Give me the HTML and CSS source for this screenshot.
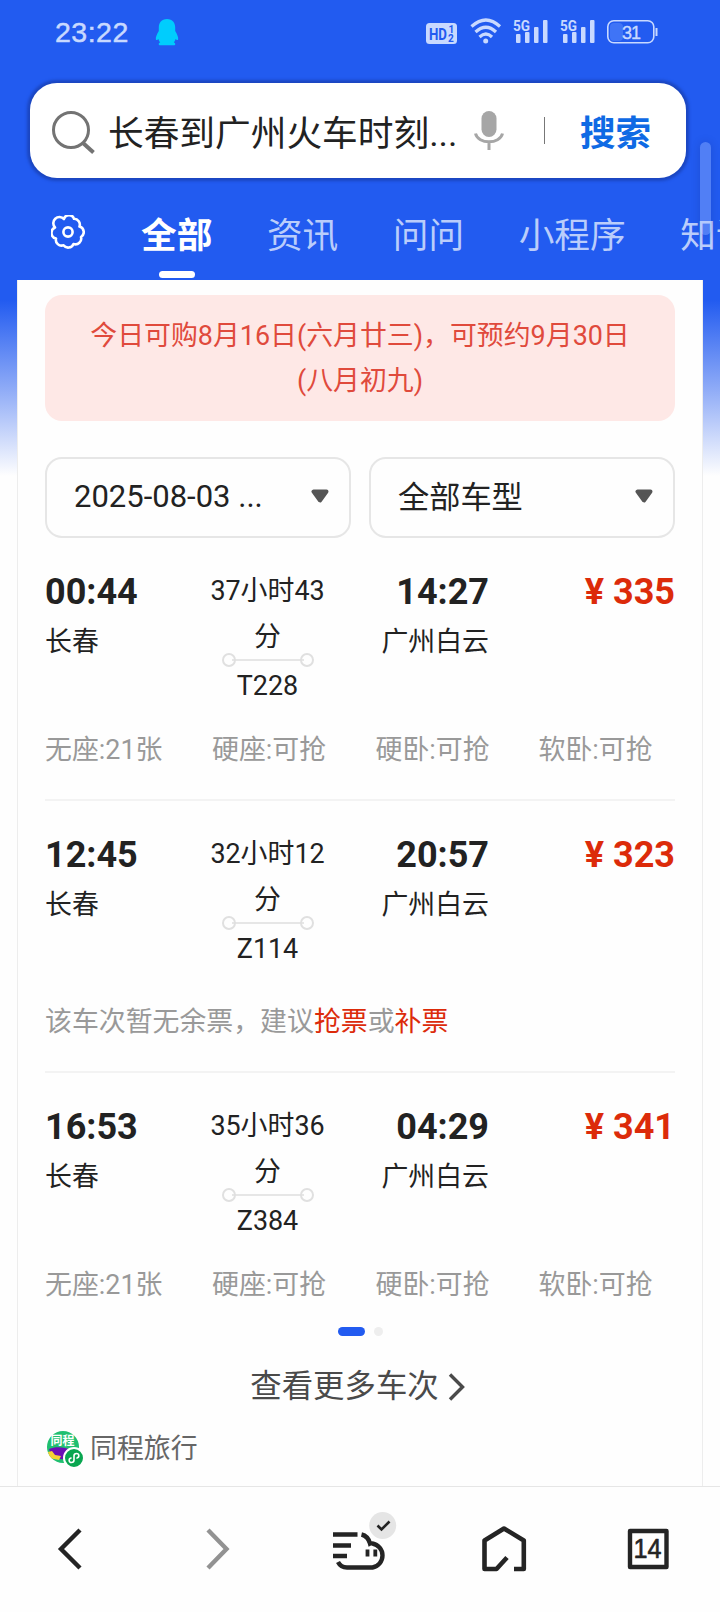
FILE: index.html
```html
<!DOCTYPE html>
<html lang="zh-CN">
<head>
<meta charset="utf-8">
<title>长春到广州火车时刻表</title>
<link rel="stylesheet" href="styles.css">
</head>
<body>
<div class="screen">
  <header class="status">
    <span class="clock">23:22</span>
    <svg class="penguin" width="24" height="27" viewBox="0 0 24 27"><path fill="#00cdfd" d="M12 0C6.500 0 3.800 4 3.800 8.500V12C2 15 .3 18.500 .9 20.500C1.300 21.600 2.600 21 3.400 20C3.800 21.500 4.500 22.500 5.200 23.300C3.500 24 3.200 25.800 4.500 26.300H19.500C20.800 25.800 20.500 24 18.800 23.300C19.500 22.500 20.200 21.500 20.600 20C21.400 21 22.700 21.600 23.100 20.500C23.700 18.500 22 15 20.200 12V8.500C20.200 4 17.500 0 12 0Z"/></svg>
    <svg class="indicators" width="240" height="32" viewBox="420 16 240 32">
      <rect x="426" y="23" width="31" height="21" rx="3.500" fill="#c8d9ff"/>
      <g fill="#225bf0" font-family="Roboto, sans-serif" font-weight="700">
        <text x="429" y="39.500" font-size="17" textLength="18" lengthAdjust="spacingAndGlyphs">HD</text>
        <text x="448.500" y="33" font-size="10">1</text>
        <text x="448" y="42" font-size="10">2</text>
      </g>
      <g fill="none" stroke="#c8d9ff" stroke-width="3.200">
        <path d="M471.500 26.500Q486 13.500 500 26.500"/>
        <path d="M475.500 32Q486 22.500 496 32"/>
        <path d="M479.500 37Q486 31 492 37"/>
      </g>
      <circle cx="485.700" cy="41" r="2.500" fill="#c8d9ff"/>
      <g fill="#c8d9ff" font-family="Roboto, sans-serif" font-weight="700" font-size="15">
        <text x="513" y="30.500" textLength="17" lengthAdjust="spacingAndGlyphs">5G</text>
        <text x="560" y="30.500" textLength="17" lengthAdjust="spacingAndGlyphs">5G</text>
        <rect x="516" y="34" width="4.500" height="9" rx="1"/><rect x="525" y="32" width="4.500" height="11" rx="1"/><rect x="534" y="27" width="4.500" height="16" rx="1"/><rect x="543" y="20" width="4.500" height="23" rx="1"/>
        <rect x="563" y="34" width="4.500" height="9" rx="1"/><rect x="572" y="32" width="4.500" height="11" rx="1"/><rect x="581" y="27" width="4.500" height="16" rx="1"/><rect x="590" y="20" width="4.500" height="23" rx="1"/>
      </g>
      <rect x="610" y="23" width="13" height="18" rx="4" fill="#3f74f6"/>
      <rect x="607.800" y="20.800" width="46" height="22" rx="6" fill="none" stroke="#c8d9ff" stroke-width="1.600"/>
      <path d="M656.500 28V36" stroke="#c8d9ff" stroke-width="2"/>
      <text x="622" y="38.500" fill="#c8d9ff" font-family="Liberation Sans, sans-serif" font-size="18" textLength="19" stroke="#c8d9ff" stroke-width=".4">31</text>
    </svg>
  </header>

  <div class="search">
    <svg width="46" height="46" viewBox="0 0 46 46" fill="none" stroke="#737373" stroke-width="3"><circle cx="21" cy="22" r="17.500"/><path d="M33 35L43.500 44.500" stroke-width="4"/></svg>
    <span class="query">长春到广州火车时刻...</span>
    <svg class="mic" width="32" height="42" viewBox="0 0 32 42"><rect x="8.500" y="1" width="15" height="26" rx="7.500" fill="#a6a6a6"/><path d="M2.500 23.500C5 34.500 27 34.500 29.500 23.500M16 32V40" fill="none" stroke="#a6a6a6" stroke-width="3"/></svg>
    <i class="bar"></i>
    <b class="go">搜索</b>
  </div>

  <nav class="tabs">
    <svg class="flower" width="34" height="34" viewBox="-17 -17 34 34" fill="none" stroke="#fff" stroke-width="2.600" stroke-linejoin="round"><path d="M-4-13A5.200 5.200 0 0 1 6-13.200A5.800 5.800 0 0 1 11.500-5.500A5.800 5.800 0 0 1 13 5A5.800 5.800 0 0 1 5.500 12A5.800 5.800 0 0 1-4.500 13.300A5.800 5.800 0 0 1-12 6.500A5.800 5.800 0 0 1-13-4.500A6 6 0 0 1-4-13Z"/><circle r="4.600"/></svg>
    <span class="tab on">全部</span>
    <span class="tab">资讯</span>
    <span class="tab">问问</span>
    <span class="tab">小程序</span>
    <span class="tab">知识</span>
  </nav>

  <main class="card">
    <p class="notice">今日可购8月16日(六月廿三)，可预约9月30日<br>(八月初九)</p>
    <div class="filters">
      <div class="filter"><span class="date">2025-08-03 ...</span><svg width="18" height="14" viewBox="0 0 18 14"><path d="M2.500 2.500H15.500L9 11.500Z" fill="#555" stroke="#555" stroke-width="4" stroke-linejoin="round"/></svg></div>
      <div class="filter"><span class="model">全部车型</span><svg width="18" height="14" viewBox="0 0 18 14"><path d="M2.500 2.500H15.500L9 11.500Z" fill="#555" stroke="#555" stroke-width="4" stroke-linejoin="round"/></svg></div>
    </div>

    <section class="train">
      <div class="trip">
        <div class="stop"><b>00:44</b><span>长春</span></div>
        <div class="via"><span>37小时43分</span><i class="route"></i><span>T228</span></div>
        <div class="stop end"><b>14:27</b><span>广州白云</span></div>
        <b class="price"><i>¥</i>335</b>
      </div>
      <div class="seats"><span>无座:21张</span><span>硬座:可抢</span><span>硬卧:可抢</span><span>软卧:可抢</span></div>
    </section>
    <section class="train">
      <div class="trip">
        <div class="stop"><b>12:45</b><span>长春</span></div>
        <div class="via"><span>32小时12分</span><i class="route"></i><span>Z114</span></div>
        <div class="stop end"><b>20:57</b><span>广州白云</span></div>
        <b class="price"><i>¥</i>323</b>
      </div>
      <p class="soldout">该车次暂无余票，建议<em>抢票</em>或<em>补票</em></p>
    </section>
    <section class="train last">
      <div class="trip">
        <div class="stop"><b>16:53</b><span>长春</span></div>
        <div class="via"><span>35小时36分</span><i class="route"></i><span>Z384</span></div>
        <div class="stop end"><b>04:29</b><span>广州白云</span></div>
        <b class="price"><i>¥</i>341</b>
      </div>
      <div class="seats"><span>无座:21张</span><span>硬座:可抢</span><span>硬卧:可抢</span><span>软卧:可抢</span></div>
    </section>

    <div class="dots"><i class="dot now"></i><i class="dot"></i></div>
    <div class="more"><span>查看更多车次</span><svg width="18" height="28" viewBox="0 0 18 28"><path d="M2 1.500L14.500 14L2 26.500" fill="none" stroke="#4a4a4a" stroke-width="3.400"/></svg></div>
    <div class="source">
      <svg width="38" height="38" viewBox="0 0 38 38">
        <defs><clipPath id="disc"><circle cx="17" cy="17" r="16"/></clipPath></defs>
        <circle cx="17" cy="17" r="16" fill="#1fbf70"/>
        <g clip-path="url(#disc)"><path d="M3 19C10 16 18 17 26 20L19 29C12 30 5 27 3 19Z" fill="#6a0fb5"/><path d="M2 22L6 21L9 25L15 26L13 30L3 28Z" fill="#f5d233"/></g>
        <text x="4.500" y="14.500" font-family="Noto Sans CJK SC, sans-serif" font-weight="700" font-size="12" fill="#fff">同程</text>
        <circle cx="28" cy="28" r="10" fill="#09a650" stroke="#fff" stroke-width="2"/>
        <path d="M25 28C22.500 28.500 22.500 32.500 25.500 32.500Q28 32.500 28 30V26Q28 23.500 30.500 23.500C33.500 23.500 33.500 27.500 31 28" fill="none" stroke="#fff" stroke-width="1.600" stroke-linecap="round"/>
      </svg>
      <span>同程旅行</span>
    </div>
  </main>

  <footer class="toolbar">
    <svg viewBox="0 0 144 125" fill="none" stroke="#242424" stroke-width="4.400"><path d="M80 43L61 62L80 81"/></svg>
    <svg viewBox="0 0 144 125" fill="none" stroke="#929292" stroke-width="4.400"><path d="M64 43L82.500 62L64 81"/></svg>
    <svg viewBox="0 0 144 125" fill="none" stroke="#242424" stroke-width="4.400">
      <path d="M45 47.500H69.500M45 58.500H63M45 69H59M50 75C52 79 55 80.500 59 80.500H84.500A12.200 12.200 0 0 0 84.500 56.500Q83 56 82 56.500Q80 49 73.500 47.500"/>
      <path d="M79.500 62.500V69.500M87.300 62.500V69.500" stroke-width="3.800"/>
      <circle cx="94.700" cy="38.500" r="13.500" fill="#e5e5e5" stroke="none"/>
      <path d="M89.500 38.500L93.500 42.500L101.500 34.500" stroke-width="2.600"/>
    </svg>
    <svg viewBox="0 0 144 125" fill="none" stroke="#242424" stroke-width="4.600" stroke-linejoin="round"><path d="M75 70.500L64.500 82H52.500V53.500L72 41.500L91.800 53.500V82H82"/></svg>
    <svg viewBox="0 0 144 125" fill="none" stroke="#242424" stroke-width="4.400" stroke-linejoin="round"><rect x="54" y="44" width="36.500" height="36"/><text x="57.500" y="71" textLength="28" lengthAdjust="spacingAndGlyphs" font-family="Liberation Sans, sans-serif" font-size="27" fill="#242424" stroke-width=".6">14</text></svg>
  </footer>
  <i class="scrollbar"></i>
</div>
</body>
</html>
```
FILE: styles.css
```css
* { box-sizing: border-box; }
body, p { margin: 0; }
i, em { font-style: normal; }
svg { display: block; flex: none; }
body { font-family: Roboto, "Noto Sans CJK SC", sans-serif; color: #222; }

.screen {
  position: relative;
  display: flex;
  flex-direction: column;
  width: 720px;
  height: 1612px;
  overflow: hidden;
  background: linear-gradient(#225bf0 0, #225bf0 300px, #90acf7 390px, #fefefe 476px);
}

.status { display: flex; height: 83px; padding: 16px 60px 0 55px; }
.clock { width: 100px; line-height: 32px; font-family: "Liberation Sans", sans-serif; font-size: 28.500px; color: #c8d9ff; letter-spacing: .5px; -webkit-text-stroke: .5px #c8d9ff; }
.penguin { margin-top: 3px; }
.indicators { margin-left: auto; }

.search {
  display: flex;
  align-items: center;
  height: 95px;
  margin: 0 34px 0 30px;
  padding: 0 35px 0 20px;
  border-radius: 27px;
  background: #fff;
  box-shadow: 0 0 3px 2.500px #1b46c0;
}
.query { flex: 1; margin-left: 12px; font-size: 35.700px; white-space: nowrap; }
.mic { margin-right: 39px; }
.bar { width: 1px; height: 27px; margin-right: 35px; background: #777; }
.go { font-size: 35.500px; color: #0f6ae4; }

.tabs { display: flex; height: 102px; padding-left: 51px; font-size: 35.700px; line-height: 52px; white-space: nowrap; color: #bacdfb; }
.flower { margin: 37px 56px 0 0; }
.tab { height: 102px; padding-top: 32px; margin-right: 54.500px; flex: none; }
.tab.on { display: flex; flex-direction: column; align-items: center; font-weight: 700; color: #fff; }
.tab.on::after { content: ""; width: 36px; height: 7px; margin-top: 9px; border-radius: 4px; background: #fff; }

.card {
  flex: 1;
  margin: 0 17px;
  padding: 15px 27px 0;
  border: solid #ededed;
  border-width: 0 1px;
  background: #fefefe;
}
.notice { height: 126px; padding-top: 19px; border-radius: 17px; background: #fee8e6; color: #e04a3c; font-size: 26.900px; line-height: 45px; text-align: center; }
.filters { display: flex; gap: 18px; margin-top: 36px; }
.filter { flex: 1; display: flex; align-items: center; justify-content: space-between; height: 81px; padding: 0 20px 4px 27px; border: 2px solid #e6e6e6; border-radius: 17px; font-size: 31.200px; }
.date { padding-top: 2px; font-size: 31px; }
.model { padding-bottom: 2px; }

.train { padding: 30px 0 29px; border-bottom: 2px solid #f3f3f3; }
.trip { display: grid; grid-template-columns: 163px 119px 162px 1fr; }
.stop { display: flex; flex-direction: column; }
.stop b, .price { font-size: 36px; line-height: 49px; }
.stop span { margin-top: 3px; font-size: 26.900px; line-height: 44px; }
.end { align-items: flex-end; }
.via { display: flex; flex-direction: column; align-items: center; text-align: center; font-size: 26.900px; line-height: 46px; }
.route { display: flex; justify-content: space-between; align-items: center; width: 92px; height: 3px; margin-top: -2px; margin-bottom: 2px; background: linear-gradient(#e6e6e6, #e6e6e6) center / 72px 2px no-repeat; }
.route::before, .route::after { content: ""; width: 10px; height: 10px; flex: none; border: 2px solid #e0e0e0; border-radius: 50%; }
.price { text-align: right; color: #dc2b0a; }
.price i { margin-right: 9px; }
.seats { display: grid; grid-template-columns: 167px 163.500px 163px 1fr; margin-top: 21px; font-size: 26.900px; line-height: 40px; color: #999; white-space: nowrap; }
.soldout { margin-top: 30px; font-size: 26.900px; line-height: 40px; color: #999; }
.soldout em { color: #dc2b0a; }
.last { padding-bottom: 0; border: 0; }

.dots { display: flex; gap: 9px; justify-content: center; margin-top: 22px; padding-left: 1px; }
.dot { width: 9px; height: 9px; border-radius: 5px; background: #eee; }
.now { width: 27px; background: #225bf0; }
.more { display: flex; align-items: center; justify-content: center; gap: 9px; height: 46px; margin-top: 28px; padding-right: 4px; font-size: 31.400px; line-height: 40px; color: #4a4a4a; }
.source { display: flex; align-items: center; gap: 6px; height: 38px; margin: 20px 0 0 1px; font-size: 26.900px; line-height: 32px; color: #666; }

.toolbar { display: flex; height: 126px; border-top: 1px solid #e6e6e6; background: #fefefe; }
.toolbar svg { width: 144px; height: 125px; }

.scrollbar { position: absolute; top: 142px; left: 700px; width: 11px; height: 93px; border-radius: 6px; background: rgba(170, 195, 255, .35); box-shadow: 0 0 10px rgba(0, 0, 60, .15); }
```
